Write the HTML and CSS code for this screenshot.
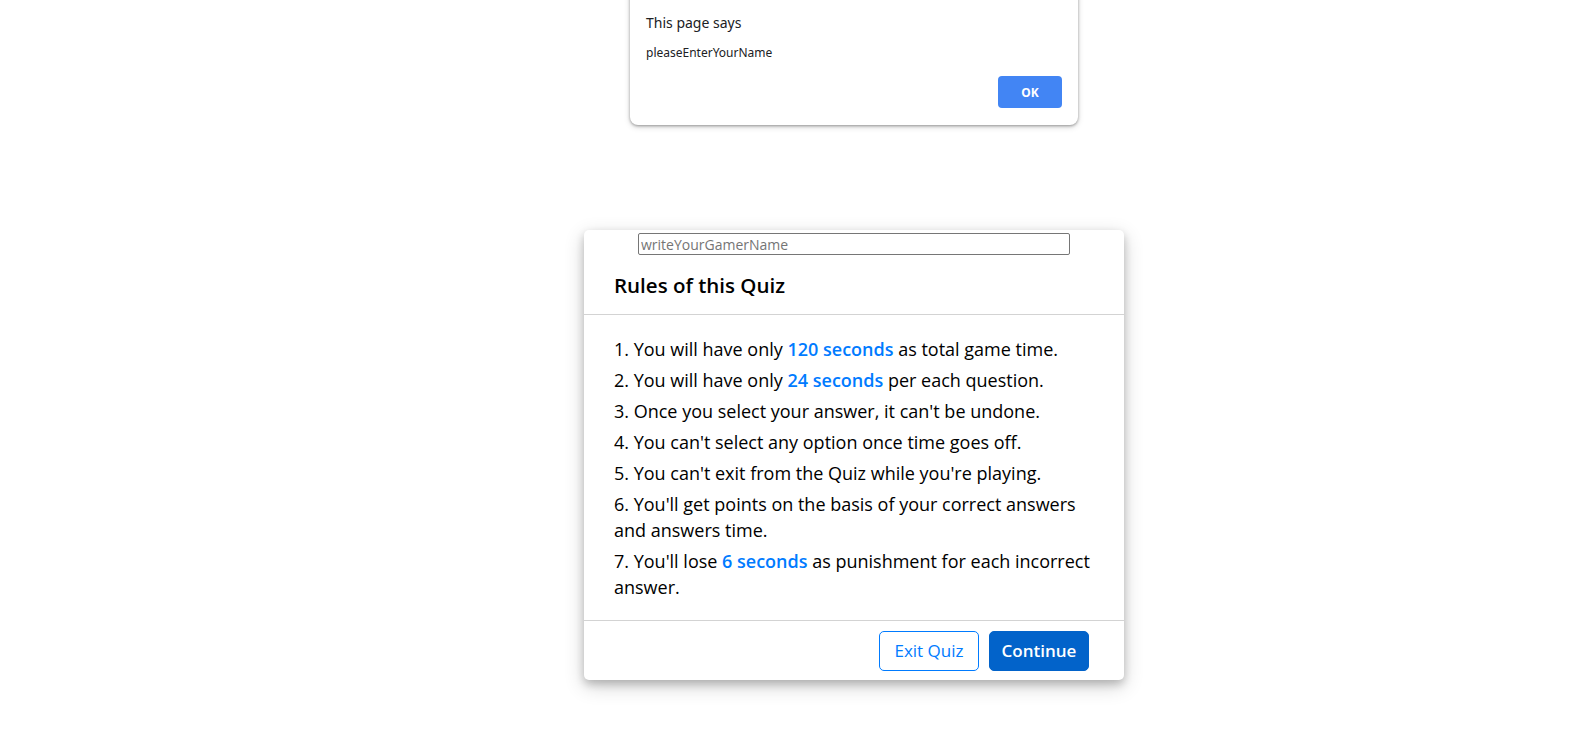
FILE: index.html
```html
<!DOCTYPE html>
<html lang="en">
<head>
<meta charset="utf-8">
<title>Quiz</title>
<link rel="stylesheet" href="styles.css">
</head>
<body>
  <div class="alert">
    <div class="alert-title">This page says</div>
    <div class="alert-msg">pleaseEnterYourName</div>
    <div class="alert-actions"><button class="alert-ok">OK</button></div>
  </div>

  <div class="info-box">
    <input class="gamer-name" type="text" placeholder="writeYourGamerName">
    <div class="info-title">Rules of this Quiz</div>
    <div class="info-list">
      <div class="info">1. You will have only <span>120 seconds</span> as total game time.</div>
      <div class="info">2. You will have only <span>24 seconds</span> per each question.</div>
      <div class="info">3. Once you select your answer, it can't be undone.</div>
      <div class="info">4. You can't select any option once time goes off.</div>
      <div class="info">5. You can't exit from the Quiz while you're playing.</div>
      <div class="info">6. You'll get points on the basis of your correct answers and answers time.</div>
      <div class="info">7. You'll lose <span>6 seconds</span> as punishment for each incorrect answer.</div>
    </div>
    <div class="buttons">
      <button class="quit">Exit Quiz</button>
      <button class="restart">Continue</button>
    </div>
  </div>
</body>
</html>
```
FILE: styles.css
```css
* {
  box-sizing: border-box;
}
html, body {
  min-height: 100%;
}
body {
  margin: 0;
  min-height: 733px;
  background: #fff;
  font-family: "Open Sans", "Noto Sans", sans-serif;
  color: #000;
  overflow: hidden;
}
.alert {
  position: absolute;
  left: 630px;
  top: -8px;
  width: 448px;
  height: 133px;
  background: #fff;
  border-radius: 0 0 8px 8px;
  box-shadow: 0 1px 3px rgba(0,0,0,0.35), 0 2px 6px rgba(0,0,0,0.15);
  padding: 21px 16px 0 16px;
  font-family: "Noto Sans", "Open Sans", sans-serif;
  color: #202124;
}
.alert-title {
  font-size: 14px;
  line-height: 20px;
}
.alert-msg {
  font-size: 12px;
  line-height: 16px;
  margin-top: 12px;
}
.alert-actions {
  display: flex;
  justify-content: flex-end;
  margin-top: 15px;
}
.alert-ok {
  width: 64px;
  height: 32px;
  border: none;
  border-radius: 4px;
  background: #4285f4;
  color: #fff;
  font-family: "Noto Sans", sans-serif;
  font-weight: 700;
  font-size: 12px;
}
.info-box {
  width: 540px;
  margin: 230px 0 0 584px;
  padding-top: 3px;
  background: #fff;
  border-radius: 5px;
  box-shadow: 0 4px 8px 0 rgba(0,0,0,0.2), 0 6px 20px 0 rgba(0,0,0,0.19);
}
.gamer-name {
  display: block;
  width: 432px;
  height: 22px;
  margin: 0 auto;
  border: 1px solid #767676;
  border-radius: 2px;
  padding: 1px 2px;
  font-family: inherit;
  font-size: 14px;
  color: #000;
}
.gamer-name::placeholder {
  color: #757575;
}
.info-title {
  height: 60px;
  border-bottom: 1px solid lightgrey;
  display: flex;
  align-items: center;
  padding: 0 30px;
  font-size: 20.5px;
  font-weight: 600;
}
.info-list {
  padding: 16px 30px 15px;
}
.info {
  margin: 5px 0;
  font-size: 18px;
  line-height: 26px;
}
.info span {
  font-weight: 600;
  color: #007bff;
}
.buttons {
  height: 60px;
  display: flex;
  align-items: center;
  justify-content: flex-end;
  padding: 0 30px;
  border-top: 1px solid lightgrey;
}
.buttons button {
  margin: 0 5px;
  height: 40px;
  width: 100px;
  font-family: inherit;
  font-size: 17px;
  border-radius: 5px;
  border: 1px solid #007bff;
  padding: 0;
}
.buttons .quit {
  color: #007bff;
  background: #fff;
  font-weight: 500;
}
.buttons .restart {
  color: #fff;
  background: #0263ca;
  border-color: #0263ca;
  font-weight: 600;
}
```
